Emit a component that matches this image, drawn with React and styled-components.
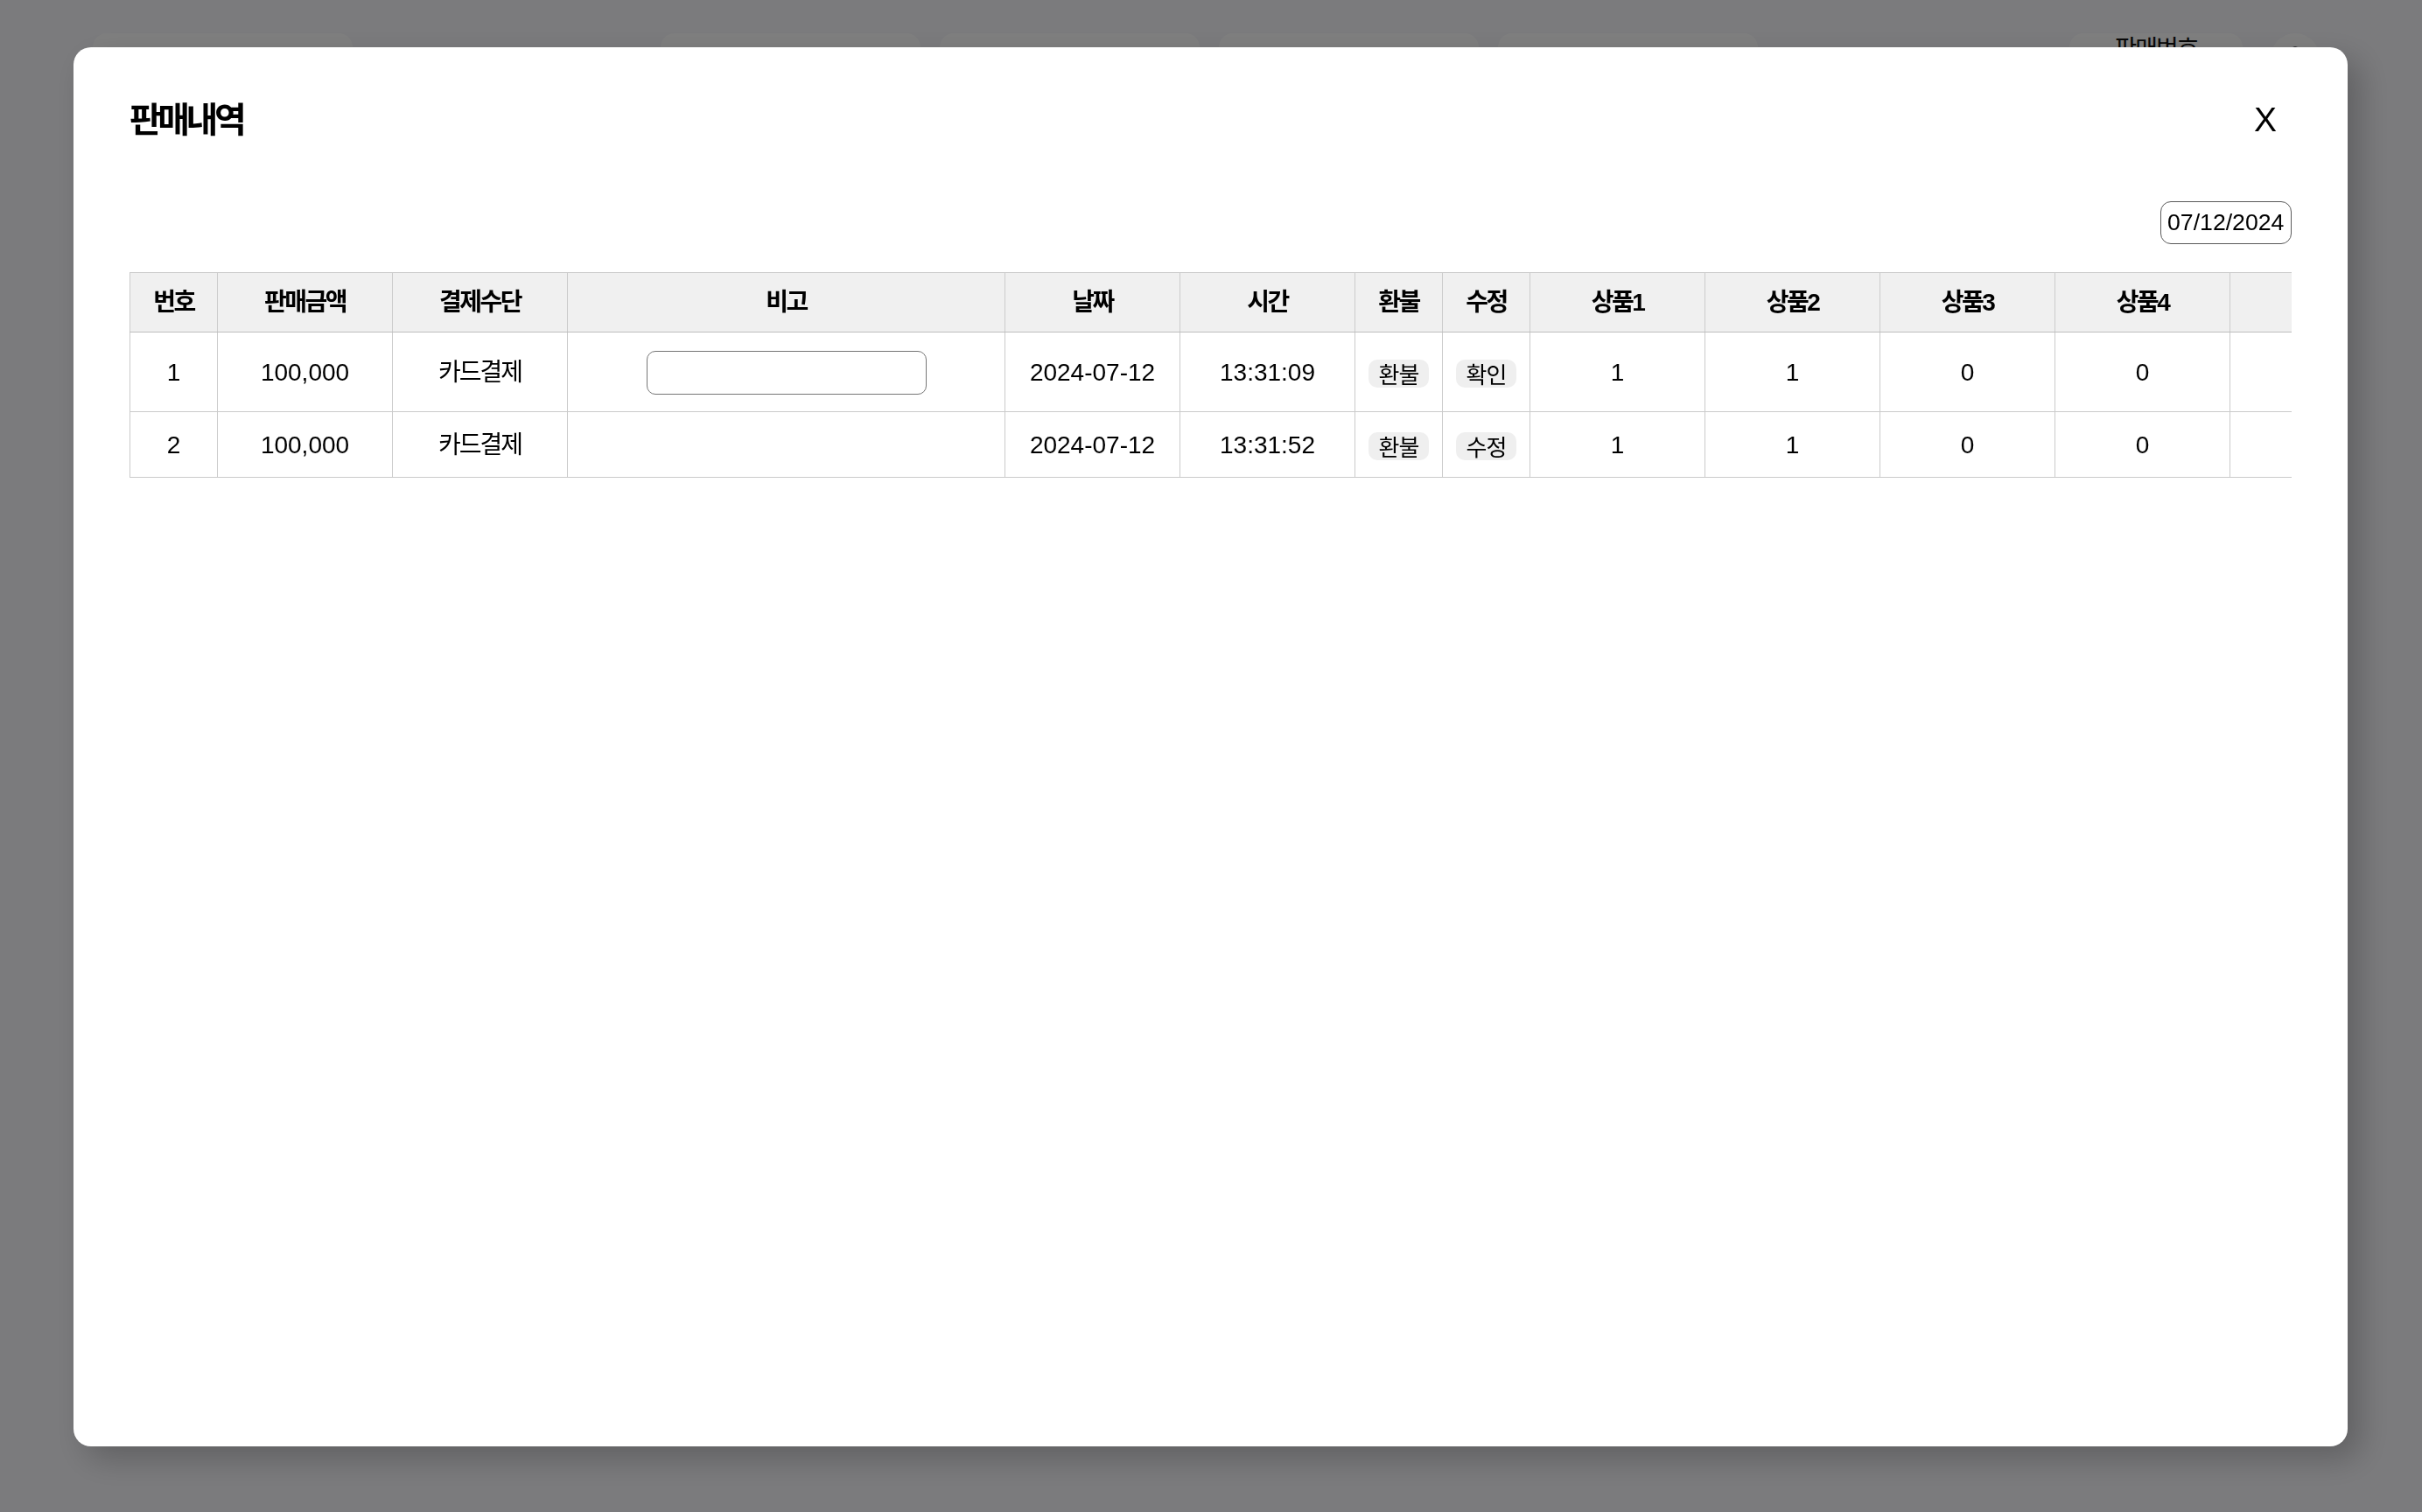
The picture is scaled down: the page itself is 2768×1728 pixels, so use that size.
import React from 'react';
import styled, { createGlobalStyle } from 'styled-components';

const GlobalStyle = createGlobalStyle`
  html, body {
    margin: 0;
    padding: 0;
  }
  body {
    font-family: "Liberation Sans", "Noto Sans CJK KR", sans-serif;
    color: #000;
    background: #f8f8fc;
  }
`;

const columns = [
  { key: 'no', label: '번호', width: 100 },
  { key: 'amount', label: '판매금액', width: 200 },
  { key: 'method', label: '결제수단', width: 200 },
  { key: 'memo', label: '비고', width: 500 },
  { key: 'date', label: '날짜', width: 200 },
  { key: 'time', label: '시간', width: 200 },
  { key: 'refund', label: '환불', width: 100 },
  { key: 'edit', label: '수정', width: 100 },
  { key: 'p1', label: '상품1', width: 200 },
  { key: 'p2', label: '상품2', width: 200 },
  { key: 'p3', label: '상품3', width: 200 },
  { key: 'p4', label: '상품4', width: 200 },
  { key: 'p5', label: '상품5', width: 200 },
  { key: 'p6', label: '상품6', width: 200 },
];

const sales = [
  { no: 1, amount: '100,000', method: '카드결제', editing: true, date: '2024-07-12', time: '13:31:09', products: [1, 1, 0, 0, 0, 0] },
  { no: 2, amount: '100,000', method: '카드결제', editing: false, date: '2024-07-12', time: '13:31:52', products: [1, 1, 0, 0, 0, 0] },
];

const SalesHistoryModal = () => {
  return (
    <Overlay>
      <Modal>
        <ModalHeader>
          <Title>판매내역</Title>
          <CloseButton>X</CloseButton>
        </ModalHeader>

        <DateRow>
          <DateInput value="07/12/2024" readOnly />
        </DateRow>

        <TableWrap>
          <Table>
            <colgroup>
              {columns.map((c) => (
                <col key={c.key} style={{ width: c.width }} />
              ))}
            </colgroup>
            <thead>
              <tr>
                {columns.map((c) => (
                  <Th key={c.key}>{c.label}</Th>
                ))}
              </tr>
            </thead>
            <tbody>
              {sales.map((s) => (
                <tr key={s.no}>
                  <Td>{s.no}</Td>
                  <Td>{s.amount}</Td>
                  <Td $ko>{s.method}</Td>
                  <Td>{s.editing ? <MemoInput /> : ''}</Td>
                  <Td>{s.date}</Td>
                  <Td>{s.time}</Td>
                  <Td>
                    <ActionButton>환불</ActionButton>
                  </Td>
                  <Td>
                    <ActionButton>{s.editing ? '확인' : '수정'}</ActionButton>
                  </Td>
                  {s.products.map((p, i) => (
                    <Td key={i}>{p}</Td>
                  ))}
                </tr>
              ))}
            </tbody>
          </Table>
        </TableWrap>
      </Modal>
    </Overlay>
  );
};

const App = () => {
  return (
    <>
      <GlobalStyle />
      <Page>
        <TopBar>
          <TabCard />
          <TabGroup>
            <TabCard />
            <TabCard />
            <TabCard />
            <TabCard />
          </TabGroup>
          <RightGroup>
            <NavCard>판매번호</NavCard>
            <ProfileCircle>
              <svg width="32" height="32" viewBox="0 0 24 24" fill="#1d1d1f">
                <circle cx="12" cy="7" r="4.5" />
                <path d="M3.5 21c0-4.4 3.8-7.5 8.5-7.5s8.5 3.1 8.5 7.5z" />
              </svg>
            </ProfileCircle>
          </RightGroup>
        </TopBar>
      </Page>
      <SalesHistoryModal />
    </>
  );
};

// 뒤쪽 페이지
const Page = styled.div`
  min-height: 100vh;
  background: #f6f6fa;
`;

const TopBar = styled.div`
  display: flex;
  align-items: flex-start;
  padding: 38px 117px 0 106px;
`;

const TabCard = styled.div`
  width: 297px;
  height: 80px;
  border-radius: 16px;
  background: #ffffff;
`;

const TabGroup = styled.div`
  display: flex;
  gap: 22px;
  margin-left: 352px;
`;

const RightGroup = styled.div`
  display: flex;
  align-items: flex-start;
  gap: 32px;
  margin-left: auto;
`;

const NavCard = styled.div`
  width: 198px;
  height: 80px;
  border-radius: 16px;
  background: #ffffff;
  box-sizing: border-box;
  padding-top: 2px;
  text-align: center;
  font-size: 28px;
  line-height: 34px;
  letter-spacing: -2px;
  color: #111;
`;

const ProfileCircle = styled.div`
  width: 56px;
  height: 56px;
  border-radius: 50%;
  background: #ffffff;
  display: flex;
  align-items: center;
  justify-content: center;
`;

// 모달
const Overlay = styled.div`
  position: fixed;
  inset: 0;
  background: rgba(0, 0, 0, 0.5);
  padding: 54px 85px 75px 84px;
  display: flex;
`;

const Modal = styled.div`
  flex: 1;
  background: #fff;
  border-radius: 20px;
  box-shadow: 14px 14px 36px rgba(0, 0, 0, 0.22);
  padding: 50px 64px;
  min-width: 0;
`;

const ModalHeader = styled.div`
  display: flex;
  justify-content: space-between;
  align-items: center;
  height: 66px;
`;

const Title = styled.h2`
  margin: 0;
  font-size: 40px;
  font-weight: 700;
  letter-spacing: -4.5px;
  line-height: 66px;
`;

const CloseButton = styled.button`
  width: 60px;
  height: 66px;
  padding: 0;
  border: none;
  background: none;
  font-family: "Liberation Sans", sans-serif;
  font-size: 39px;
  color: #000;
  text-align: center;
  cursor: pointer;
`;

const DateRow = styled.div`
  display: flex;
  justify-content: flex-end;
  margin-top: 60px;
`;

const DateInput = styled.input`
  width: 150px;
  height: 49px;
  box-sizing: border-box;
  padding: 0 7px;
  border: 1px solid #5a5a5a;
  border-radius: 12px;
  font-family: "Liberation Sans", sans-serif;
  font-size: 26.67px;
  color: #000;
  background: #fff;
  outline: none;
`;

const TableWrap = styled.div`
  margin-top: 32px;
  overflow-x: auto;
  scrollbar-width: none;
  &::-webkit-scrollbar {
    display: none;
  }
`;

const Table = styled.table`
  border-collapse: collapse;
  table-layout: fixed;
  width: 2800px;
`;

const Th = styled.th`
  position: sticky;
  top: 0;
  z-index: 1;
  background: #f0f0f0;
  border: 1px solid #cbcbcb;
  border-bottom-color: #bdbdbd;
  padding: 20px 0;
  font-size: 28px;
  line-height: 27px;
  font-weight: 700;
  letter-spacing: -2.5px;
  text-align: center;
  white-space: nowrap;
  box-shadow: 0 8px 16px -4px rgba(0, 0, 0, 0.12);
`;

const Td = styled.td`
  border: 1px solid #cbcbcb;
  padding: 21px 0 19px;
  font-size: 28px;
  line-height: 32px;
  text-align: center;
  vertical-align: middle;
  white-space: nowrap;
  letter-spacing: ${(p) => (p.$ko ? '-2px' : 'normal')};
`;

const MemoInput = styled.input`
  display: block;
  margin: 0 auto;
  width: 320px;
  height: 50px;
  box-sizing: border-box;
  border: 1px solid #767676;
  border-radius: 10px;
  background: #fff;
  outline: none;
  font-size: 26px;
`;

const ActionButton = styled.button`
  height: 32px;
  padding: 0 12px;
  border: none;
  border-radius: 10px;
  background: #efefef;
  font-family: "Noto Sans CJK KR", sans-serif;
  font-size: 26px;
  line-height: 32px;
  letter-spacing: -1px;
  color: #000;
  vertical-align: middle;
  cursor: pointer;
`;

export default App;
